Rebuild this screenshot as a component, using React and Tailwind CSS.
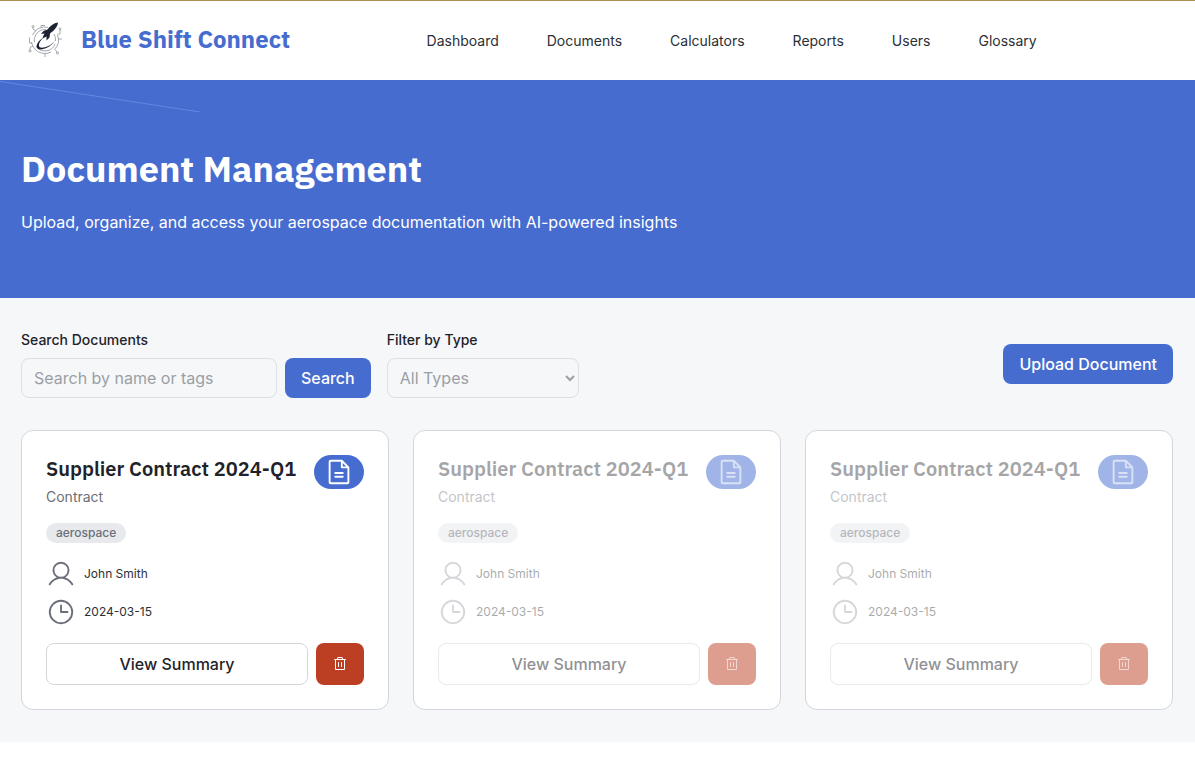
import clsx from "clsx";
import { PiClock, PiFileText, PiTrash, PiUser } from "react-icons/pi";

const navLinks = ["Dashboard", "Documents", "Calculators", "Reports", "Users", "Glossary"];

const documents = [
  { id: 1, name: "Supplier Contract 2024-Q1", type: "Contract", tag: "aerospace", owner: "John Smith", date: "2024-03-15" },
  { id: 2, name: "Supplier Contract 2024-Q1", type: "Contract", tag: "aerospace", owner: "John Smith", date: "2024-03-15", muted: true },
  { id: 3, name: "Supplier Contract 2024-Q1", type: "Contract", tag: "aerospace", owner: "John Smith", date: "2024-03-15", muted: true },
];

function Logo() {
  return (
    <svg className="w-12 h-12 shrink-0" viewBox="0 0 48 48" fill="none" aria-hidden>
      {/* circuit ring */}
      <g stroke="#9a9ea5" strokeWidth="0.9">
        <path d="M27 12.300 A13.500 13.500 0 0 0 11.500 20 M10.500 27 A13.500 13.500 0 0 0 30 37 M33.500 34.500 A13.500 13.500 0 0 0 36.500 20" />
        <path d="M25 14.500 A10.700 10.700 0 0 0 13.500 27 M15 31 A10.700 10.700 0 0 0 34 29 M34.500 26 A10.700 10.700 0 0 0 33 19" />
        <path d="M15 16 L12 14 V12.500 M8.500 22.500 V28 H11 M36.500 19 H39 V15 M37.500 24 H41 M34 34.500 L36 37 M12 31 L9 32.500 V35 M24 38.500 V42 M20 12.500 V10.500 H24" />
        <circle cx="12" cy="11.500" r="1" />
        <circle cx="39" cy="14" r="1" />
        <circle cx="36.500" cy="38" r="1.100" />
        <circle cx="9" cy="36" r="1.100" />
      </g>
      {/* rocket */}
      <path
        d="M37 7.500 C32.500 8 29 11 26.500 14.500 L22.500 16 L20 19 L23.500 18.500 L22.500 20.500 L21.500 23.500 L25.500 21.500 L25.500 25.500 L28.500 22.500 L29 18.500 C33 15.500 36.500 12 37 7.500Z"
        fill="#1d2233"
      />
      {/* trail */}
      <path
        d="M23 22 C17 25.500 14 31 16.500 33.500 C19.500 36 29 33 33.500 26.500 C29 31.500 21 34 18.500 32 C17 30 18.500 26 23 22Z"
        fill="#1d2233"
      />
    </svg>
  );
}

function Header() {
  return (
    <header className="bg-white border-t border-[#b08d57]">
      <div className="pl-[21px] pr-[22px] h-[79px] pb-1 flex items-center justify-between">
        <a href="#" className="flex items-center gap-3">
          <Logo />
          <span className="font-['IBM_Plex_Sans','Noto_Sans',sans-serif] text-2xl font-bold text-[#466cd0]">
            Blue Shift Connect
          </span>
        </a>
        <nav className="flex items-center gap-12 pt-1">
          {navLinks.map((label) => (
            <a key={label} href="#" className="text-sm text-[#2b2f36] hover:text-[#466cd0]">
              {label}
            </a>
          ))}
        </nav>
        <div />
      </div>
    </header>
  );
}

function Hero() {
  return (
    <section className="relative bg-[#466cd0] text-white">
      <svg className="absolute left-0 top-0 w-52 h-8" viewBox="0 0 208 32" fill="none" aria-hidden>
        <path d="M0 1.500 L200 32" stroke="#6b8ee4" strokeWidth="0.8" />
      </svg>
      <div className="pl-[21px] pr-[22px] py-16">
        <h1 className="font-['IBM_Plex_Sans','Noto_Sans',sans-serif] text-4xl leading-[50px] font-bold mb-4">
          Document Management
        </h1>
        <p className="text-base">Upload, organize, and access your aerospace documentation with AI-powered insights</p>
      </div>
    </section>
  );
}

function Toolbar() {
  return (
    <div className="flex items-center justify-between mb-8">
      <form className="flex items-end gap-4" onSubmit={(e) => e.preventDefault()}>
        <div>
          <label htmlFor="doc-search" className="block text-sm font-medium mb-2">
            Search Documents
          </label>
          <div className="flex gap-2">
            <input
              id="doc-search"
              type="text"
              placeholder="Search by name or tags"
              className="w-64 h-10 px-3 rounded-lg border border-[#dcdfe3] bg-transparent placeholder-[#9b9fa5] focus:outline-none focus:border-[#466cd0]"
            />
            <button type="submit" className="h-10 px-4 rounded-lg bg-[#466cd0] text-white font-medium">
              Search
            </button>
          </div>
        </div>
        <div>
          <label htmlFor="doc-type" className="block text-sm font-medium mb-2">
            Filter by Type
          </label>
          <select
            id="doc-type"
            className="block w-48 h-10 pl-2 rounded-lg border border-[#dcdfe3] bg-transparent text-[#9b9fa5] focus:outline-none"
          >
            <option>All Types</option>
          </select>
        </div>
      </form>
      <button type="button" className="h-10 px-4 rounded-lg bg-[#466cd0] text-white font-medium">
        Upload Document
      </button>
    </div>
  );
}

function DocumentCard({ doc }) {
  const iconColor = doc.muted ? "text-[#aeb0b6]" : "text-[#6b6f7a]";

  return (
    <article className="bg-white border border-[#d3d7dc] rounded-xl p-6">
      <div className={clsx(doc.muted && "opacity-50")}>
        <div className="flex items-start justify-between mb-4">
          <div className={clsx(doc.muted && "opacity-80")}>
            <h3 className="font-['IBM_Plex_Sans','Noto_Sans',sans-serif] text-xl font-semibold whitespace-nowrap mb-1">
              {doc.name}
            </h3>
            <p className="text-sm text-[#6b6f76]">{doc.type}</p>
          </div>
          <span className="rounded-full bg-[#466cd0] text-white px-2.5 py-0.5">
            <PiFileText size={30} className={clsx(doc.muted && "opacity-60")} />
          </span>
        </div>

        <span className="block w-fit rounded-full bg-[#e7e9ec] px-2.5 py-0.5 text-xs font-medium text-[#6b6f7a] mb-4">
          {doc.tag}
        </span>

        <div className="space-y-2 mb-4 text-xs text-[#2b2f36]">
          <div className="flex items-center gap-2">
            <PiUser size={30} className={iconColor} />
            <span className={clsx(doc.muted && "opacity-80")}>{doc.owner}</span>
          </div>
          <div className="flex items-center gap-2">
            <PiClock size={30} className={iconColor} />
            <span className={clsx(doc.muted && "opacity-80")}>{doc.date}</span>
          </div>
        </div>

        <div className="flex gap-2">
          <button type="button" className="flex-1 py-2 rounded-lg border border-[#d3d7dc] font-medium">
            View Summary
          </button>
          <button type="button" aria-label="Delete document" className="px-4 rounded-lg bg-[#bc3f24] text-white">
            <PiTrash size={16} className={clsx(doc.muted && "opacity-60")} />
          </button>
        </div>
      </div>
    </article>
  );
}

export default function App() {
  return (
    <div className="min-h-screen bg-white font-['Inter',sans-serif] text-[#1f2329]">
      <Header />
      <Hero />
      <main className="bg-[#f5f7f9] pl-[21px] pr-[22px] py-8">
        <Toolbar />
        <div className="grid grid-cols-3 gap-6">
          {documents.map((doc) => (
            <DocumentCard key={doc.id} doc={doc} />
          ))}
        </div>
      </main>
    </div>
  );
}
